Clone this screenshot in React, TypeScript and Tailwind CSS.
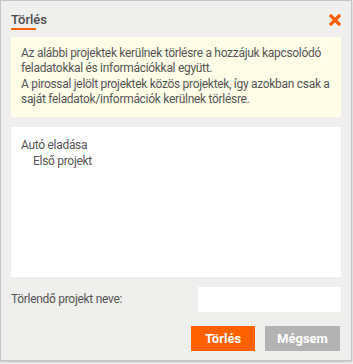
import React from "react";

export default function App() {
  return (
    <div className="w-[353px] h-[364px] bg-[#f4f4f4]" style={{ fontFamily: "Roboto, 'Noto Sans', sans-serif" }}>
      <div className="w-[352px] h-[361px] bg-[#efefed] border border-[#c4c4c4] shadow-[0_1px_2px_rgba(0,0,0,0.25)] px-[10px] pt-[11px] flex flex-col">
        <div className="flex items-start justify-between h-[25px] shrink-0">
          <div className="flex flex-col">
            <span className="text-[13px] leading-[15px] font-medium text-[#4b4b4b]">Törlés</span>
            <span className="mt-[1px] h-[2px] w-[25px] bg-[#ff6000]" />
          </div>
          <svg width="12" height="12" viewBox="0 0 12 12" className="mt-[2px]">
            <path d="M2 2 L10 10 M10 2 L2 10" stroke="#ff6000" strokeWidth="3.2" strokeLinecap="square" />
          </svg>
        </div>
        <div className="h-[80px] shrink-0 bg-[#fffde8] px-[10px] pt-[9px] text-[12px] leading-[15.3px] text-[#555] tracking-[-0.3px]">
          <p className="m-0 leading-[15.3px]">Az alábbi projektek kerülnek törlésre a hozzájuk kapcsolódó</p>
          <p className="m-0 leading-[15.3px]">feladatokkal és információkkal együtt.</p>
          <p className="m-0 leading-[15.3px]">A pirossal jelölt projektek közös projektek, így azokban csak a</p>
          <p className="m-0 leading-[15.3px]">saját feladatok/információk kerülnek törlésre.</p>
        </div>
        <div className="mt-[10px] shrink-0 bg-white h-[150px] px-[10px] pt-[10px] text-[12px] leading-[16px] text-[#555] tracking-[-0.3px]">
          <p className="m-0 leading-[16px]">Autó eladása</p>
          <p className="m-0 leading-[16px] pl-[12px]">Első projekt</p>
        </div>
        <div className="mt-[10px] shrink-0 h-[25px] flex items-center justify-between">
          <span className="text-[12px] leading-[15px] text-[#555] tracking-[-0.3px]">Törlendő projekt neve:</span>
          <div className="w-[143px] h-[25px] bg-white" />
        </div>
        <div className="mt-[14px] shrink-0 flex justify-end gap-[10px] pr-[1px]">
          <button className="w-[64px] h-[25px] bg-[#ff6000] text-white text-[13px] leading-[25px] font-bold">Törlés</button>
          <button className="w-[75px] h-[25px] bg-[#b3b3b3] text-white text-[13px] leading-[25px] font-bold">Mégsem</button>
        </div>
      </div>
    </div>
  );
}
